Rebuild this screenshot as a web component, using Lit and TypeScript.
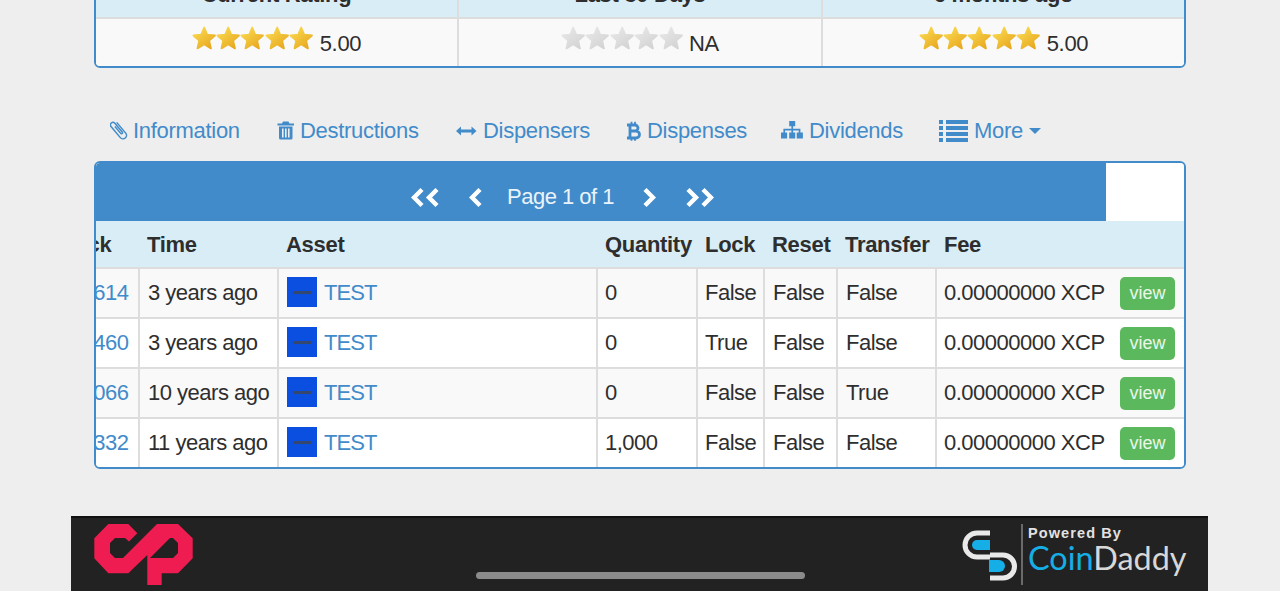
import { LitElement, html, css, svg } from "lit";
import { customElement } from "lit/decorators.js";

const STAR = "12,1.5 15,8.6 22.6,9.3 16.9,14.4 18.6,22 12,18 5.4,22 7.1,14.4 1.4,9.3 9,8.6";

const star = (kind: string) => html`<svg class="star" viewBox="0 0 24 24">
  <defs>
    <linearGradient id="gold" x1="0.1" y1="0" x2="0.9" y2="1">
      <stop offset="0" stop-color="#fbdc52" /><stop offset="1" stop-color="#e6a51d" />
    </linearGradient>
    <linearGradient id="grey" x1="0.1" y1="0" x2="0.9" y2="1">
      <stop offset="0" stop-color="#e8e8e8" /><stop offset="1" stop-color="#d2d2d2" />
    </linearGradient>
  </defs>
  <polygon points=${STAR} fill="url(#${kind})" stroke="url(#${kind})" stroke-width="1.8" stroke-linejoin="round" />
</svg>`;

const stars = (kind: string) => html`<span class="stars">${[0, 1, 2, 3, 4].map(() => star(kind))}</span>`;

const ICONS: Record<string, unknown> = {
  clip: svg`<path transform="translate(8.5 10) rotate(-40) translate(-4.5 -11)" d="M8 4v14a3.500 3.500 0 0 1-7 0V3.500a2.500 2.500 0 0 1 5 0V15a1 1 0 0 1-2 0V6" fill="none" stroke="#428bca" stroke-width="1.5" />`,
  trash: svg`<path fill="#428bca" d="M6 1.500h5.500l1 2H17v2H.5v-2h4.500zM2 6.500h13.500V18a1.500 1.500 0 0 1-1.500 1.500H3.500A1.500 1.500 0 0 1 2 18zM5 8.500v9h1.600v-9zm3 0v9h1.600v-9zm3 0v9h1.600v-9z" />`,
  arrows: svg`<path fill="#428bca" d="M0 11 5 6.600v3h10.500v-3l5 4.400-5 4.400v-3H5v3z" />`,
  btc: svg`<path fill="none" stroke="#428bca" stroke-width="2.800" d="M2 5h8a3 3 0 0 1 0 6H5h6a3.300 3.300 0 0 1 0 7H2M5 5v13" /><path fill="none" stroke="#428bca" stroke-width="1.800" d="M6.500 1.700V4M10 1.700V4M6.500 18.500v2.300M10 18.500v2.300" />`,
  site: svg`<path fill="#428bca" d="M8.200 1h6v5.200h-2.100v2.600h7.300v3.600h2.500v6.100h-6.200v-6.100h2v-2H12.100v2h2.100v6.100H8.200v-6.100h2.200v-2H4v2h2.100v6.100H0v-6.100h2.400V8.800h8V6.200H8.200z" />`,
  list: svg`<path fill="#428bca" d="M0 0h4v4H0zM7 0h22v4H7zM0 6h4v4H0zM7 6h22v4H7zM0 12h4v4H0zM7 12h22v4H7zM0 18h4v4H0zM7 18h22v4H7z" />`,
};

const TABS = [
  { icon: "clip", w: 23, width: 131, label: "Information" },
  { icon: "trash", w: 23, width: 143, label: "Destructions" },
  { icon: "arrows", w: 27, width: 133, label: "Dispensers" },
  { icon: "btc", w: 22, width: 120, label: "Dispenses" },
  { icon: "site", w: 28, width: 122, label: "Dividends" },
  { icon: "list", w: 35, width: 101, label: "More" },
];

const ROWS = [
  ["000614", "3 years ago", "0", "False", "False", "False"],
  ["000460", "3 years ago", "0", "True", "False", "False"],
  ["000066", "10 years ago", "0", "False", "False", "True"],
  ["000332", "11 years ago", "1,000", "False", "False", "False"],
];

@customElement("app-root")
export class AppRoot extends LitElement {
  static styles = css`
    :host {
      display: block;
      position: relative;
      height: 591px;
      overflow: hidden;
      background: #eeeeee;
      color: #2e2e2e;
      font: 22px/30px "Liberation Sans", Arial, sans-serif;
      letter-spacing: -0.3px;
    }
    * { box-sizing: border-box; }
    a { color: #428bca; text-decoration: none; }
    .page { display: flex; flex-direction: column; }
    .panel {
      width: 1092px;
      margin-left: 94px;
      border: 2px solid #428bca;
      border-radius: 6px;
      overflow: hidden;
      background: #fff;
    }
    .rating { margin-top: -30px; }
    .rating-grid { display: grid; grid-template-columns: 361px 364px 363px; }
    .rating-grid > div {
      display: flex;
      align-items: center;
      justify-content: center;
      height: 47px;
    }
    .rating-grid > div + div:not(:nth-child(4)) { border-left: 2px solid #dddddd; }
    .rh { background: #d9edf7; font-weight: 700; border-bottom: 2px solid #dddddd; }
    .rc { background: #f9f9f9; }
    .stars { display: flex; margin-right: 5px; margin-top: -8px; }
    .star { width: 24.4px; height: 24.4px; display: block; }
    .score { margin: 2px 0 0 1px; }

    .tabs {
      display: flex;
      align-items: center;
      gap: 36px;
      height: 42px;
      margin: 42px 0 9px 110px;
    }
    .tab { display: flex; align-items: center; flex: none; }
    .tab svg { display: block; flex: none; }
    .caret {
      width: 0;
      height: 0;
      margin-left: 6px;
      border-left: 6px solid transparent;
      border-right: 6px solid transparent;
      border-top: 6px solid #428bca;
    }

    .toolbar { height: 58px; display: flex; background: #fff; }
    .pager {
      width: 1010px;
      height: 58px;
      background: #428bca;
      color: #eaf3fa;
      display: flex;
      align-items: center;
      padding: 10px 0 0 315px;
    }
    .pager svg { display: block; flex: none; }
    .pg-first { margin-right: 29px; }
    .pg-prev { margin-right: 24px; }
    .pg-label { margin-right: 28px; letter-spacing: -0.5px; }
    .pg-next { margin-right: 29px; }

    table {
      table-layout: fixed;
      border-collapse: collapse;
      width: 1136px;
      margin-left: -48px;
    }
    th, td {
      padding: 0 0 0 7px;
      text-align: left;
      white-space: nowrap;
      overflow: hidden;
    }
    th {
      height: 47px;
      background: #d9edf7;
      font-weight: 700;
      border-bottom: 2px solid #dddddd;
      padding: 1px 0 0 8px;
    }
    td {
      height: 50px;
      border-bottom: 2px solid #dddddd;
      border-left: 2px solid #dddddd;
      letter-spacing: -0.5px;
    }
    td:nth-child(2), td:nth-child(3), td:nth-child(6), td:nth-child(7) { padding-left: 8px; }
    td:first-child { border-left: 0; padding-left: 10px; }
    th:first-child { padding-left: 5px; }
    tr:last-child td { border-bottom: 0; height: 49px; }
    tbody tr:nth-child(odd) td { background: #f9f9f9; }
    tbody tr:nth-child(even) td { background: #fff; }
    .asset { display: flex; align-items: center; gap: 7px; }
    .asset a { letter-spacing: -0.9px; }
    .thumb {
      width: 30px;
      height: 30px;
      margin-top: -2px;
      background: #0a4fe0;
      display: flex;
      align-items: center;
      justify-content: center;
    }
    .thumb i { display: block; width: 18px; height: 3px; background: #33476f; }
    .fee { display: flex; align-items: center; justify-content: space-between; padding-right: 9px; }
    .view {
      width: 55px;
      height: 33px;
      border-radius: 5px;
      background: #5cb85c;
      color: #eaf6ea;
      font-size: 18px;
      line-height: 33px;
      text-align: center;
      letter-spacing: 0;
    }

    .footer {
      width: 1137px;
      height: 75px;
      margin: 47px 0 0 71px;
      background: #222222;
      border-top: 2px solid #111;
      display: flex;
      justify-content: space-between;
    }
    .footer svg { display: block; flex: none; }
    .cp { margin: 6px 0 0 23px; }
    .cd { display: flex; margin-right: 22px; padding-top: 6px; }
    .cd-text { width: 158px; margin-left: 5px; padding-top: 1px; display: flex; flex-direction: column; }
    .powered { font: 700 14.5px/16px "Liberation Sans", sans-serif; letter-spacing: 1.1px; color: #e2e2e2; }
    .brand { font: 400 32.4px/33px "Lato", sans-serif; letter-spacing: 0; color: #d8d8d8; white-space: nowrap; }
    .brand b { font-weight: 400; color: #16aee6; }
    .home {
      position: absolute;
      left: 476px;
      top: 572px;
      width: 329px;
      height: 7px;
      border-radius: 4px;
      background: #8b8b8b;
    }
  `;

  private chev(dir: "l" | "r", double: boolean, cls: string) {
    const one = (x: number) =>
      dir === "l"
        ? svg`<polyline points="${x + 11},2.5 ${x + 3},10.5 ${x + 11},18.5" />`
        : svg`<polyline points="${x + 3},2.5 ${x + 11},10.5 ${x + 3},18.5" />`;
    const w = double ? 29 : 14;
    return html`<svg class=${cls} width=${w} height="21" viewBox="0 0 ${w} 21">
      <g fill="none" stroke="#fff" stroke-width="4.400">${one(0)}${double ? one(15) : ""}</g>
    </svg>`;
  }

  render() {
    return html`
      <div class="page">
        <section class="panel rating">
          <div class="rating-grid">
            <div class="rh">Current Rating</div>
            <div class="rh">Last 30 Days</div>
            <div class="rh">6 months ago</div>
            <div class="rc">${stars("gold")}<span class="score">5.00</span></div>
            <div class="rc">${stars("grey")}<span class="score">NA</span></div>
            <div class="rc">${stars("gold")}<span class="score">5.00</span></div>
          </div>
        </section>

        <nav class="tabs">
          ${TABS.map(
            (t) => html`<a class="tab" href="#" style="width:${t.width}px">
              <svg width=${t.w} height="24" viewBox="0 -1 ${t.w} 24">${ICONS[t.icon]}</svg>${t.label}
              ${t.label === "More" ? html`<span class="caret"></span>` : ""}
            </a>`
          )}
        </nav>

        <section class="panel">
          <div class="toolbar">
            <div class="pager">
              ${this.chev("l", true, "pg-first")}${this.chev("l", false, "pg-prev")}
              <span class="pg-label">Page 1 of 1</span>
              ${this.chev("r", false, "pg-next")}${this.chev("r", true, "")}
            </div>
          </div>
          <table>
            <colgroup>
              <col style="width:91px" /><col style="width:139px" /><col style="width:319px" />
              <col style="width:100px" /><col style="width:67px" /><col style="width:73px" />
              <col style="width:99px" /><col style="width:248px" />
            </colgroup>
            <thead>
              <tr>
                <th>Block</th><th>Time</th><th>Asset</th><th>Quantity</th>
                <th>Lock</th><th>Reset</th><th>Transfer</th><th>Fee</th>
              </tr>
            </thead>
            <tbody>
              ${ROWS.map(
                (r) => html`<tr>
                  <td><a href="#">${r[0]}</a></td>
                  <td>${r[1]}</td>
                  <td>
                    <div class="asset">
                      <span class="thumb"><i></i></span><a href="#">TEST</a>
                    </div>
                  </td>
                  <td>${r[2]}</td>
                  <td>${r[3]}</td>
                  <td>${r[4]}</td>
                  <td>${r[5]}</td>
                  <td>
                    <div class="fee">
                      <span>0.00000000 XCP</span><a class="view" href="#">view</a>
                    </div>
                  </td>
                </tr>`
              )}
            </tbody>
          </table>
        </section>

        <footer class="footer">
          <svg class="cp" width="100" height="62" viewBox="94 524 100 62">
            <path
              fill="#ee1c50"
              fill-rule="evenodd"
              d="M137.300 533.300 128.300 524H108.300L94.300 538.300V558.300L108.300 573.300H128.300L147.300 555V585H161.700V573.300H178L192.700 558.300V538.300L178 524H157L123 558H115L110 553V543L115 538H125L129 541.500ZM170 538H173L178 543V553L173 558H150Z"
            />
          </svg>
          <div class="cd">
            <svg width="62" height="62" viewBox="960 524 62 62">
              <path fill="none" stroke="#e9e9e9" stroke-width="5" d="M989 533H976a12 12 0 0 0 0 24H989" />
              <path fill="#16aee6" d="M989 540H976a5 5 0 0 0 0 10H989z" />
              <path fill="none" stroke="#e9e9e9" stroke-width="5" d="M989 555H1002a11.500 11.500 0 0 1 0 23H989" />
              <path fill="#16aee6" d="M988 560H998a6 6 0 0 1 0 12H988z" />
              <rect x="1020" y="524" width="2" height="61" fill="#6a6a6a" />
            </svg>
            <div class="cd-text">
              <span class="powered">Powered By</span>
              <span class="brand"><b>Coin</b>Daddy</span>
            </div>
          </div>
        </footer>
      </div>
      <div class="home"></div>
    `;
  }
}
